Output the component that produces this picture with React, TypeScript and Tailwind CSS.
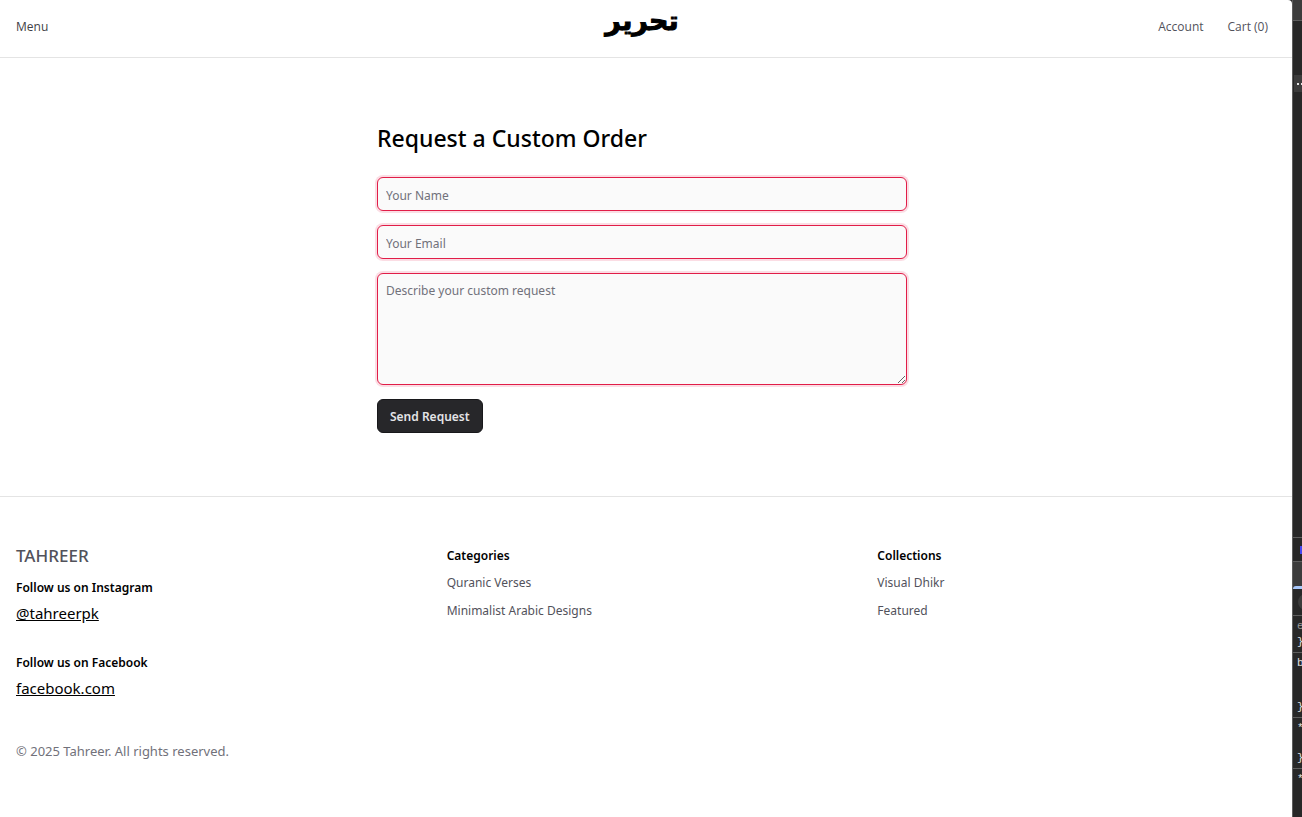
import React from "react";

const fieldClass =
  "block w-full rounded-md border border-[#e11d48] bg-[#fafafa] px-2 text-[12px] text-[#18181b] outline-none ring-2 ring-[#e11d48]/15 placeholder:text-[#71717a]";

function Header() {
  return (
    <header className="flex h-[58px] items-center border-b border-[#e4e4e4] pb-1 pl-4 pr-6 font-['Open_Sans',sans-serif] text-[12px] text-[#52525b]">
      <nav className="flex flex-1">
        <button type="button" className="text-[#3f3f46]">Menu</button>
      </nav>
      <a href="/" className="pb-3 font-['DejaVu_Sans',sans-serif] text-[27px] font-bold leading-8 text-black [-webkit-text-stroke:1px_black]" lang="ar" dir="rtl">
        تحرير
      </a>
      <nav className="flex flex-1 justify-end gap-6">
        <a href="/account">Account</a>
        <a href="/cart">Cart (0)</a>
      </nav>
    </header>
  );
}

function RequestForm() {
  return (
    <main className="pb-[63px] pr-2 pt-[62px]">
      <form className="mx-auto flex w-full max-w-[530px] flex-col gap-[14px]" onSubmit={(e) => e.preventDefault()}>
        <h1 className="pb-[7px] text-[23px] font-medium leading-9 text-black">Request a Custom Order</h1>
        <input aria-label="Your Name" placeholder="Your Name" className={fieldClass + " h-[34px] pt-[2px]"} />
        <input aria-label="Your Email" type="email" placeholder="Your Email" className={fieldClass + " h-[34px] pt-[2px]"} />
        <textarea aria-label="Describe your custom request" placeholder="Describe your custom request" className={fieldClass + " h-28 resize-y py-[7px] leading-5"} />
        <button type="submit" className="h-[34px] self-start rounded-md border border-[#18181b] bg-[#27272a] px-3 pt-[2px] text-[12px] font-semibold text-[#e4e4e7]">
          Send Request
        </button>
      </form>
    </main>
  );
}

function LinkColumn({ title, links }: { title: string; links: string[] }) {
  return (
    <section className="flex flex-col text-[12px] leading-5">
      <h2 className="pb-[7px] font-semibold text-black">{title}</h2>
      <ul className="flex flex-col gap-2 text-[#52525b]">
        {links.map((l) => (
          <li key={l}><a href="#">{l}</a></li>
        ))}
      </ul>
    </section>
  );
}

function Social({ title, link }: { title: string; link: string }) {
  return (
    <section className="flex flex-col items-start gap-[3px]">
      <h3 className="text-[12px] font-semibold leading-5 text-black">{title}</h3>
      <a href="#" className="text-[15px] leading-6 text-black underline">{link}</a>
    </section>
  );
}

function Footer() {
  return (
    <footer className="border-t border-[#e4e4e4] px-4 pt-[49px]">
      <div className="grid grid-cols-3 gap-8">
        <div>
          <p className="pb-3 text-[17px] font-medium leading-5 text-[#52525b]">TAHREER</p>
          <div className="flex flex-col gap-7">
            <Social title="Follow us on Instagram" link="@tahreerpk" />
            <Social title="Follow us on Facebook" link="facebook.com" />
          </div>
        </div>
        <LinkColumn title="Categories" links={["Quranic Verses", "Minimalist Arabic Designs"]} />
        <LinkColumn title="Collections" links={["Visual Dhikr", "Featured"]} />
      </div>
      <p className="pt-[41px] text-[13px] leading-5 text-[#71717a]">© 2025 Tahreer. All rights reserved.</p>
    </footer>
  );
}

function Inspector() {
  return (
    <aside className="flex w-[10px] shrink-0 flex-col overflow-hidden border-l border-[#5e5e5e] bg-[#282828] font-['Liberation_Mono',monospace] text-[11px] leading-4 text-[#e3e3e3]">
      <div className="h-[21px] border-b border-[#5e5e5e] bg-[#3c3c3c]" />
      <div className="h-[517px] border-b border-[#5e5e5e] pl-px pt-[54px]">
        <div className="flex h-[17px] items-center gap-[2px] bg-[#3c3c3c] pl-[3px]">
          <span className="size-[2px] shrink-0 bg-[#e3e3e3]" />
          <span className="size-[2px] shrink-0 bg-[#e3e3e3]" />
        </div>
      </div>
      <div className="flex h-6 items-center justify-end border-b border-[#5e5e5e]">
        <span className="h-2 w-[2px] bg-[#4747f0]" />
      </div>
      <div className="flex h-[27px] flex-col justify-end bg-[#3c3c3c]">
        <span className="h-[3px] rounded-tl-[3px] bg-[#a8c7fa]" />
      </div>
      <div className="flex h-[27px] items-center border-b border-[#5e5e5e] pl-[5px]">
        <span className="size-4 shrink-0 rounded-full bg-[#3c3c3c]" />
      </div>
      <div className="h-[37px] border-b border-[#5e5e5e] pl-1 pt-[2px]">
        <p className="text-[#9a9a9a]">e</p>
        <p>{"}"}</p>
      </div>
      <div className="flex h-[65px] flex-col justify-between border-b border-[#5e5e5e] pb-[2px] pl-1 pt-[2px]">
        <p>b</p>
        <p>{"}"}</p>
      </div>
      <div className="flex h-[51px] flex-col justify-between border-b border-[#5e5e5e] pb-[2px] pl-1 pt-[2px]">
        <p>*</p>
        <p>{"}"}</p>
      </div>
      <div className="pl-1 pt-[2px]">
        <p>*</p>
      </div>
    </aside>
  );
}

export default function App() {
  return (
    <div className="flex min-h-screen bg-[#282828] font-['Noto_Sans',sans-serif]">
      <div className="min-w-0 flex-1 rounded-tr-sm bg-white">
        <Header />
        <RequestForm />
        <Footer />
      </div>
      <Inspector />
    </div>
  );
}
